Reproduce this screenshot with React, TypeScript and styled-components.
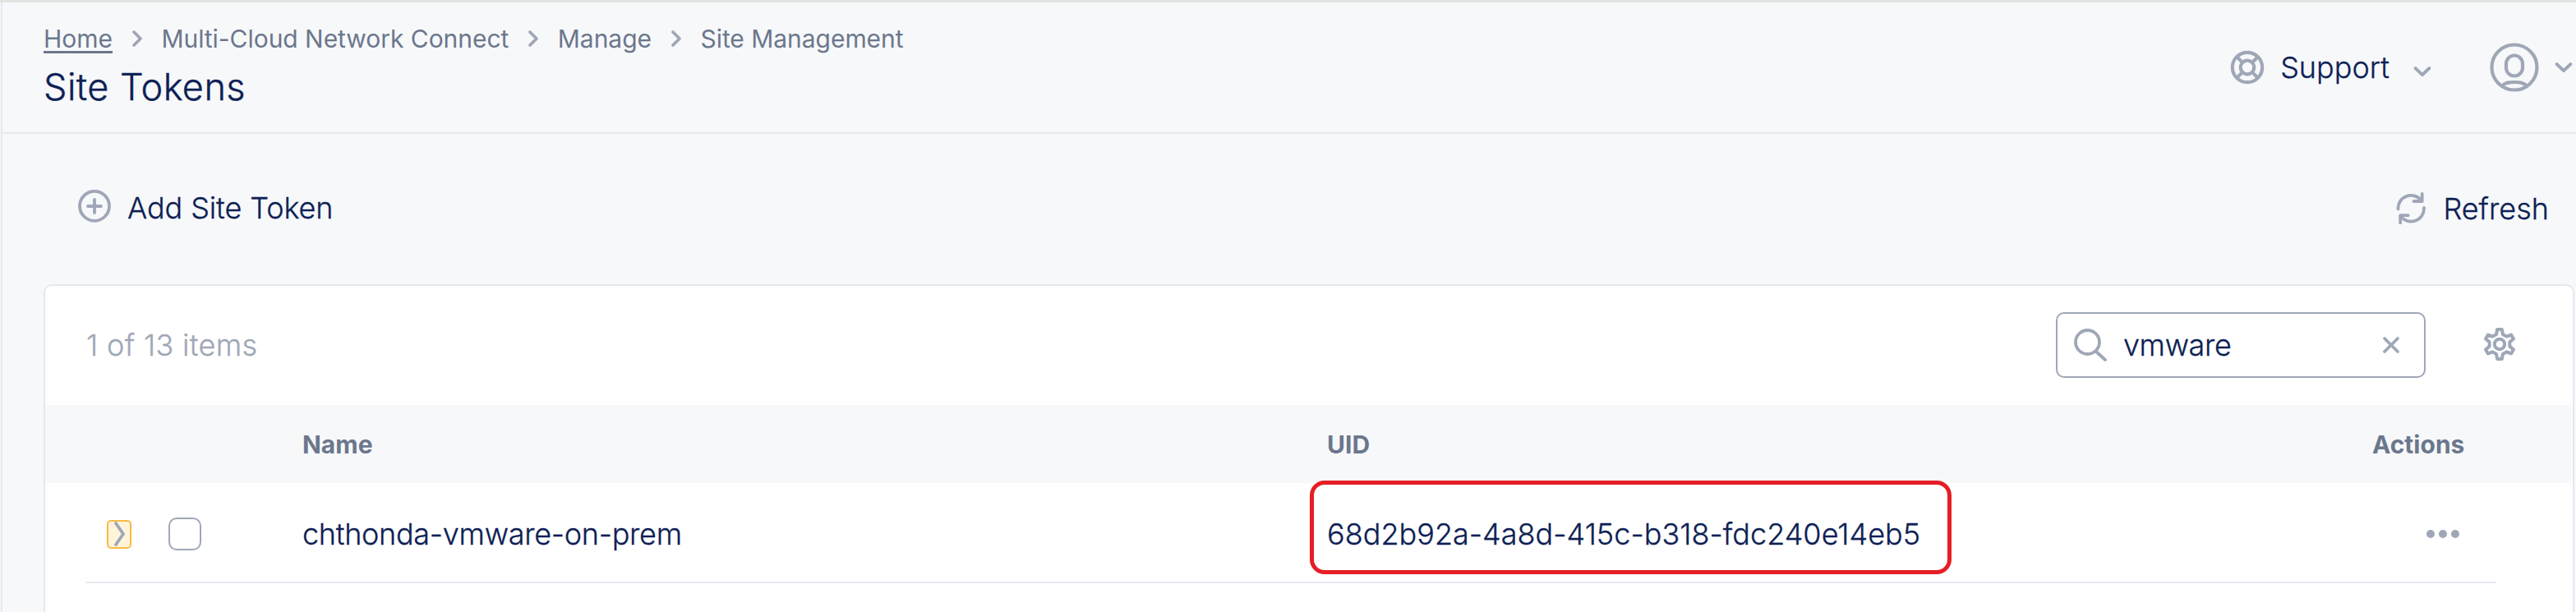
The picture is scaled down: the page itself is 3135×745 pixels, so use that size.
import React from "react";
import styled, { createGlobalStyle } from "styled-components";

const Global = createGlobalStyle`
  *, *::before, *::after { box-sizing: border-box; }
  html, body { margin: 0; padding: 0; background: #f7f8fa; }
  body { overflow: hidden; font-family: Inter, "Liberation Sans", sans-serif; color: #0e1f55; }
`;

const INK = "#0e1f55";
const SLATE = "#6b778c";
const GREY = "#9fa7b7";
const LINE = "#e5e8ef";

const Page = styled.div`
  width: 3135px;
  height: 745px;
  border-top: 3px solid #e1e3e1;
  background: #f7f8fa;
  padding-left: 1px;
  overflow: hidden;
`;

const Shell = styled.div`
  height: 742px;
  border-left: 2px solid ${LINE};
  display: flex;
  flex-direction: column;
`;

const Header = styled.header`
  height: 160px;
  flex: none;
  border-bottom: 2px solid ${LINE};
  display: flex;
  justify-content: space-between;
`;

const Heading = styled.div`
  padding: 26px 0 0 50px;
  display: flex;
  flex-direction: column;
`;

const Crumbs = styled.nav`
  display: flex;
  align-items: center;
  height: 36px;
`;

const Text = styled.span<{ $track?: number; $top?: number; $left?: number; $muted?: boolean }>`
  font-size: 36px;
  font-weight: 300;
  -webkit-text-stroke: 0.3px currentColor;
  line-height: 36px;
  letter-spacing: ${(p) => p.$track ?? 0}px;
  margin-top: ${(p) => p.$top ?? 0}px;
  margin-left: ${(p) => p.$left ?? 0}px;
  color: ${(p) => (p.$muted ? GREY : INK)};
  white-space: nowrap;
`;

const Crumb = styled.span`
  font-size: 30px;
  font-weight: 400;
  line-height: 36px;
  letter-spacing: -0.04px;
  color: ${SLATE};
  white-space: nowrap;
`;

const HomeLink = styled(Crumb)`
  height: 36px;
  border-bottom: 3px solid ${SLATE};
`;

const ColumnTitle = styled.span`
  font-size: 30px;
  font-weight: 700;
  line-height: 36px;
  color: ${SLATE};
  padding-top: 1px;
`;

const CrumbArrow = styled.svg`
  width: 14px;
  height: 22px;
  margin: 0 22.5px 0 23px;
  flex: none;
`;

const Title = styled.h1`
  margin: 14px 0 0;
  font-size: 45px;
  line-height: 54px;
  font-weight: 300;
  -webkit-text-stroke: 0.4px currentColor;
  letter-spacing: 0.45px;
  color: ${INK};
`;

const UserTools = styled.div`
  display: flex;
  align-items: center;
  height: 158px;
  padding-right: 3px;
`;

const Glyph = styled.svg<{ $w: number; $h?: number; $l?: number; $t?: number }>`
  display: block;
  flex: none;
  width: ${(p) => p.$w}px;
  height: ${(p) => p.$h ?? p.$w}px;
  margin-left: ${(p) => p.$l ?? 0}px;
  margin-top: ${(p) => p.$t ?? 0}px;
  fill: none;
  stroke: ${GREY};
  stroke-linecap: round;
  stroke-linejoin: round;
`;

const Toolbar = styled.div`
  height: 183px;
  flex: none;
  padding: 68px 33px 0 92px;
  display: flex;
  justify-content: space-between;
  align-items: flex-start;
`;

const Action = styled.div<{ $top?: number }>`
  display: flex;
  align-items: flex-start;
  padding-top: ${(p) => p.$top ?? 0}px;
`;

const Card = styled.section`
  flex: 1;
  margin: 0 2px 0 50px;
  border: 2px solid ${LINE};
  border-bottom: 0;
  border-radius: 10px 10px 0 0;
  background: #fff;
`;

const CardBar = styled.div`
  height: 145px;
  padding: 0 69px 1px 50px;
  display: flex;
  align-items: center;
  justify-content: space-between;
`;

const Tools = styled.div`
  display: flex;
  align-items: center;
`;

const SearchBox = styled.div`
  width: 450px;
  height: 80px;
  border: 2px solid ${GREY};
  border-radius: 10px;
  display: flex;
  align-items: center;
  padding: 0 29px 0 20px;
`;

const SearchValue = styled(Text)`
  flex: 1;
`;

const HeadRow = styled.div`
  height: 95px;
  margin-right: 1px;
  background: #f7f8fa;
  display: grid;
  grid-template-columns: 313px 1247px 1fr 243px;
  align-items: center;
`;

const BodyRow = styled.div`
  height: 122px;
  margin: 0 93px 0 50px;
  padding-top: 4px;
  border-bottom: 2px solid ${LINE};
  display: grid;
  grid-template-columns: 263px 1247px 1fr 85px;
  align-items: center;
`;

const Controls = styled.div`
  display: flex;
  align-items: center;
  gap: 45px;
  padding-left: 25px;
`;

const Expander = styled.div`
  width: 30px;
  height: 35px;
  border: 2.5px solid #f7bb47;
  border-radius: 5px;
  background: #fff4d8;
  display: flex;
  align-items: center;
  justify-content: center;
`;

const Checkbox = styled.div`
  width: 40px;
  height: 40px;
  border: 2px solid ${GREY};
  border-radius: 10px;
  background: #fff;
`;

const UidCell = styled.div`
  position: relative;
  display: flex;
`;

const Highlight = styled.div`
  position: absolute;
  left: -21px;
  top: -47px;
  width: 781px;
  height: 114px;
  border: 5px solid #e51e25;
  border-radius: 18px;
`;

const Dots = styled(Glyph)`
  fill: ${GREY};
  stroke: none;
`;

const CrumbSeparator = () => (
  <CrumbArrow viewBox="0 0 14 22" fill="none" stroke={GREY} strokeWidth="3.8" strokeLinecap="round" strokeLinejoin="round">
    <path d="M3 3l8 8-8 8" />
  </CrumbArrow>
);

const ChevronDown = ({ left, top }: { left: number; top?: number }) => (
  <Glyph $w={24} $h={16} $l={left} $t={top} viewBox="0 0 24 16" strokeWidth="3.8">
    <path d="M3.5 4l8.5 8 8.5-8" />
  </Glyph>
);

/* Six-toothed gear outline around (20, 20). */
const gearOutline = Array.from({ length: 6 }, (_, i) => {
  const a = (i * Math.PI) / 3;
  return [[-3.9, -12], [-2.9, -17.9], [2.9, -17.9], [3.9, -12]].map(([x, y]) => {
    const px = 20 + x * Math.cos(a) - y * Math.sin(a);
    const py = 20 + x * Math.sin(a) + y * Math.cos(a);
    return `${px.toFixed(2)},${py.toFixed(2)}`;
  });
})
  .flat()
  .join(" ");

export default function App() {
  return (
    <>
      <Global />
      <Page>
        <Shell>
          <Header>
            <Heading>
              <Crumbs>
                <HomeLink>Home</HomeLink>
                <CrumbSeparator />
                <Crumb>Multi-Cloud Network Connect</Crumb>
                <CrumbSeparator />
                <Crumb>Manage</Crumb>
                <CrumbSeparator />
                <Crumb>Site Management</Crumb>
              </Crumbs>
              <Title>Site Tokens</Title>
            </Heading>
            <UserTools>
              <Glyph $w={42} viewBox="0 0 42 42" strokeWidth="4.2">
                <circle cx="21" cy="21" r="18.2" />
                <circle cx="21" cy="21" r="8.3" />
                <path d="M8.5 8.5l6.5 6.5M33.5 8.5l-6.5 6.5M8.5 33.5l6.5-6.5M33.5 33.5l-6.5-6.5" />
              </Glyph>
              <Text $left={19}>Support</Text>
              <ChevronDown left={28} top={9} />
              <Glyph $w={60} $l={70} viewBox="0 0 60 60" strokeWidth="4.2">
                <circle cx="30" cy="30" r="27.5" />
                <rect x="20" y="15.5" width="20" height="25" rx="10" />
                <path d="M15 52.5c4-4.5 10-4.5 15-4.5s11 0 15 4.5" />
              </Glyph>
              <ChevronDown left={18} />
            </UserTools>
          </Header>

          <Toolbar>
            <Action>
              <Glyph $w={40} viewBox="0 0 40 40" strokeWidth="3.8">
                <circle cx="20" cy="19.8" r="18" />
                <path d="M20 12v16M12 20h16" />
              </Glyph>
              <Text $left={20} $top={4} $track={-0.1}>Add Site Token</Text>
            </Action>
            <Action $top={2}>
              <Glyph $w={40} viewBox="0 0 40 40" strokeWidth="3.8">
                <path d="M4.5 21.5A15.7 15.7 0 0 1 33 11.5M33.7 2.8v9.2h-10.2M36 20A15.7 15.7 0 0 1 7.2 29.5M16.7 29.2h-9.500v9" />
              </Glyph>
              <Text $left={19} $top={3}>Refresh</Text>
            </Action>
          </Toolbar>

          <Card>
            <CardBar>
              <Text $muted $track={0.35}>1 of 13 items</Text>
              <Tools>
                <SearchBox>
                  <Glyph $w={40} viewBox="0 0 40 40" strokeWidth="3.8">
                    <circle cx="16.5" cy="16.5" r="14.5" />
                    <path d="M27 28l11 10" />
                  </Glyph>
                  <SearchValue $left={20} $track={-0.4}>vmware</SearchValue>
                  <Glyph $w={22} viewBox="0 0 22 22" strokeWidth="3.8">
                    <path d="M3 3l16 16M19 3L3 19" />
                  </Glyph>
                </SearchBox>
                <Glyph $w={40} $l={70} $t={-2} viewBox="0 0 40 40" strokeWidth="4">
                  <circle cx="20" cy="20" r="6.2" />
                  <polygon points={gearOutline} />
                </Glyph>
              </Tools>
            </CardBar>
            <HeadRow>
              <span />
              <ColumnTitle>Name</ColumnTitle>
              <ColumnTitle>UID</ColumnTitle>
              <ColumnTitle>Actions</ColumnTitle>
            </HeadRow>
            <BodyRow>
              <Controls>
                <Expander>
                  <Glyph $w={14} $h={30} viewBox="0 0 14 30" strokeWidth="3.8">
                    <path d="M3 2l9 13-9 13" />
                  </Glyph>
                </Expander>
                <Checkbox />
              </Controls>
              <Text $track={-0.3}>chthonda-vmware-on-prem</Text>
              <UidCell>
                <Text $track={0.02}>68d2b92a-4a8d-415c-b318-fdc240e14eb5</Text>
                <Highlight />
              </UidCell>
              <Dots $w={40} $h={12} viewBox="0 0 40 12">
                <circle cx="5" cy="6" r="5" />
                <circle cx="20" cy="6" r="5" />
                <circle cx="35" cy="6" r="5" />
              </Dots>
            </BodyRow>
          </Card>
        </Shell>
      </Page>
    </>
  );
}
